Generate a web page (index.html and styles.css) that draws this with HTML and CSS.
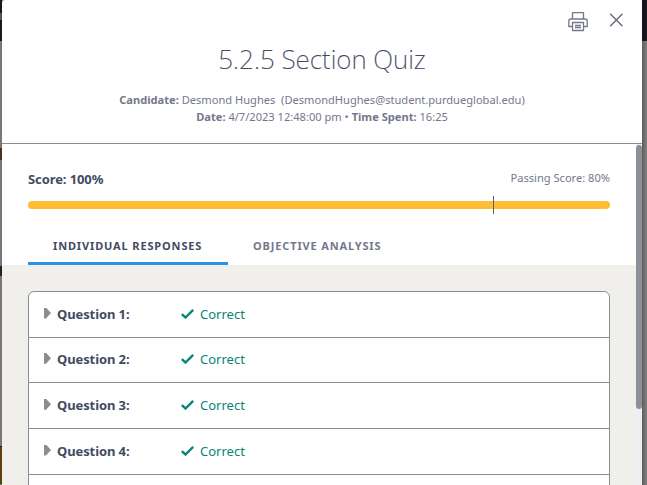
FILE: index.html
```html
<!DOCTYPE html>
<html lang="en">
<head>
<meta charset="utf-8">
<title>Section Quiz</title>
<link rel="stylesheet" href="styles.css">
</head>
<body>
<div class="edge left"><i class="nav-text"></i><i class="mark"></i><i class="corner"></i><i class="gold"></i></div>
<main class="modal">
  <header class="head">
    <div class="actions">
      <svg class="print" width="20" height="20" viewBox="0 0 20 20" fill="none" stroke="#74788d" stroke-width="1.3" stroke-linejoin="round"><path d="M4.500 7V.700h11V7M4.500 14.500H.8V9q0-2 2-2h14.400q2 0 2 2v5.500h-3.700M4.500 10.500h11v8h-11zM7 13.500h6M7 15.500h6"/></svg>
      <svg class="close" width="14" height="14" viewBox="0 0 14 14" fill="none" stroke="#656a7c" stroke-width="1.4"><path d="M1.200.7l12.300 12.600M13.500.7L1.200 13.300"/></svg>
    </div>
    <h1>5.2.5 Section Quiz</h1>
    <p class="meta"><b>Candidate:</b> Desmond Hughes &nbsp;(DesmondHughes@student.purdueglobal.edu)</p>
    <p class="meta"><b>Date:</b> 4/7/2023 12:48:00 pm • <b>Time Spent:</b> 16:25</p>
  </header>
  <div class="body">
    <div class="content">
      <section class="summary">
        <div class="scores"><strong>Score: 100%</strong><span class="passing">Passing Score: 80%</span></div>
        <div class="bar"><i class="tick"></i></div>
        <nav class="tabs"><span class="tab active">INDIVIDUAL RESPONSES</span><span class="tab">OBJECTIVE ANALYSIS</span></nav>
      </section>
      <section class="panel">
        <div class="list">
          <div class="row"><i class="arrow"></i><b>Question 1:</b><svg class="check" width="13" height="10" viewBox="0 0 13 10"><path d="M.8 5.200L4.500 8.500 12.200.9"/></svg><span>Correct</span></div>
          <div class="row"><i class="arrow"></i><b>Question 2:</b><svg class="check" width="13" height="10" viewBox="0 0 13 10"><path d="M.8 5.200L4.500 8.500 12.200.9"/></svg><span>Correct</span></div>
          <div class="row"><i class="arrow"></i><b>Question 3:</b><svg class="check" width="13" height="10" viewBox="0 0 13 10"><path d="M.8 5.200L4.500 8.500 12.200.9"/></svg><span>Correct</span></div>
          <div class="row"><i class="arrow"></i><b>Question 4:</b><svg class="check" width="13" height="10" viewBox="0 0 13 10"><path d="M.8 5.200L4.500 8.500 12.200.9"/></svg><span>Correct</span></div>
          <div class="row"></div>
        </div>
      </section>
    </div>
    <div class="track"><div class="thumb"></div></div>
  </div>
</main>
<div class="edge right"></div>
</body>
</html>
```
FILE: styles.css
```css
* { box-sizing: border-box; }
body { margin: 0; width: 647px; height: 485px; overflow: hidden; display: flex; font-family: "Noto Sans", sans-serif; color: #434b62; background: #777; }
.edge { height: 485px; background: linear-gradient(#18181f 41px, #777 41px); }
.left { width: 2px; display: flex; flex-direction: column; }
.left i { flex: none; width: 2px; }
.nav-text { height: 7px; margin-top: 13px; background: #555; }
.mark { height: 12px; margin-top: 128px; background: #51301c; }
.corner { height: 10px; margin-top: 106px; background: #25211f; }
.gold { height: 38px; margin-top: 170px; background: #5c4109; border-top: 1px solid #222; }
.right { width: 5px; background: linear-gradient(90deg, #0004, #0000), linear-gradient(#18181f 41px, #808080 41px); }
.modal { width: 640px; height: 485px; background: #fff; border-top-left-radius: 3px; display: flex; flex-direction: column; }
.head { height: 144px; flex: none; border-bottom: 1px solid #8b8d95; text-align: center; }
.actions { height: 40px; padding: 12px 19px 0 0; display: flex; justify-content: flex-end; gap: 21px; }
.close { margin-top: 1px; }
h1 { margin: 0; height: 54px; font-size: 26px; line-height: 38px; font-weight: 200; -webkit-text-stroke: 0.15px #434b62; }
.meta { margin: 0; height: 17px; font-size: 11.1px; line-height: 11px; color: #74788c; white-space: nowrap; }
.meta b { font-weight: 700; }
.body { flex: 1; min-height: 0; display: flex; }
.content { width: 634px; overflow: hidden; }
.summary { height: 121px; padding: 26px 26px 0; }
.scores { height: 31px; display: flex; justify-content: space-between; font-size: 13px; line-height: 18px; }
.scores strong { font-weight: 700; letter-spacing: -0.1px; }
.passing { font-size: 11.1px; line-height: 16px; color: #74788c; }
.bar { width: 582px; height: 8px; border-radius: 4px; background: #ffbc34; position: relative; }
.tick { position: absolute; left: 465px; top: -5px; width: 1px; height: 18px; background: #5b5e68; }
.tabs { display: flex; height: 56px; }
.tab { height: 56px; padding: 28px 25px 0; font-size: 11px; line-height: 18px; font-weight: 700; letter-spacing: 0.86px; color: #74788c; white-space: nowrap; }
.tab.active { width: 200px; color: #434b62; border-bottom: 3px solid #2a94e8; border-radius: 3px 3px 0 0; }
.panel { padding: 26px 26px 0; background: #f0efeb; border-radius: 3px 3px 0 0; }
.list { width: 582px; height: 250px; background: #fff; border: 1px solid #8b8d95; border-radius: 6px 6px 0 0; }
.row { height: 45.67px; display: flex; align-items: center; padding: 0 0 0.6px 15px; border-bottom: 1px solid #8b8d95; font-size: 13px; line-height: 18px; }
.row:nth-child(2) { padding-bottom: 1.4px; }
.row b { width: 124px; margin-left: 6px; font-weight: 700; letter-spacing: -0.1px; }
.row span { margin-left: 6px; color: #078477; }
.arrow { width: 7px; height: 11px; margin-top: -2px; background: #8b8d95; clip-path: polygon(0 0, 2px 0, 7px 5.5px, 2px 11px, 0 11px); }
.check { margin-top: -1px; fill: none; stroke: #078477; stroke-width: 2.4; }
.track { width: 6px; padding-top: 1px; background: #efeff1; }
.thumb { height: 264px; border-radius: 3px; background: #8c9098; }
```
